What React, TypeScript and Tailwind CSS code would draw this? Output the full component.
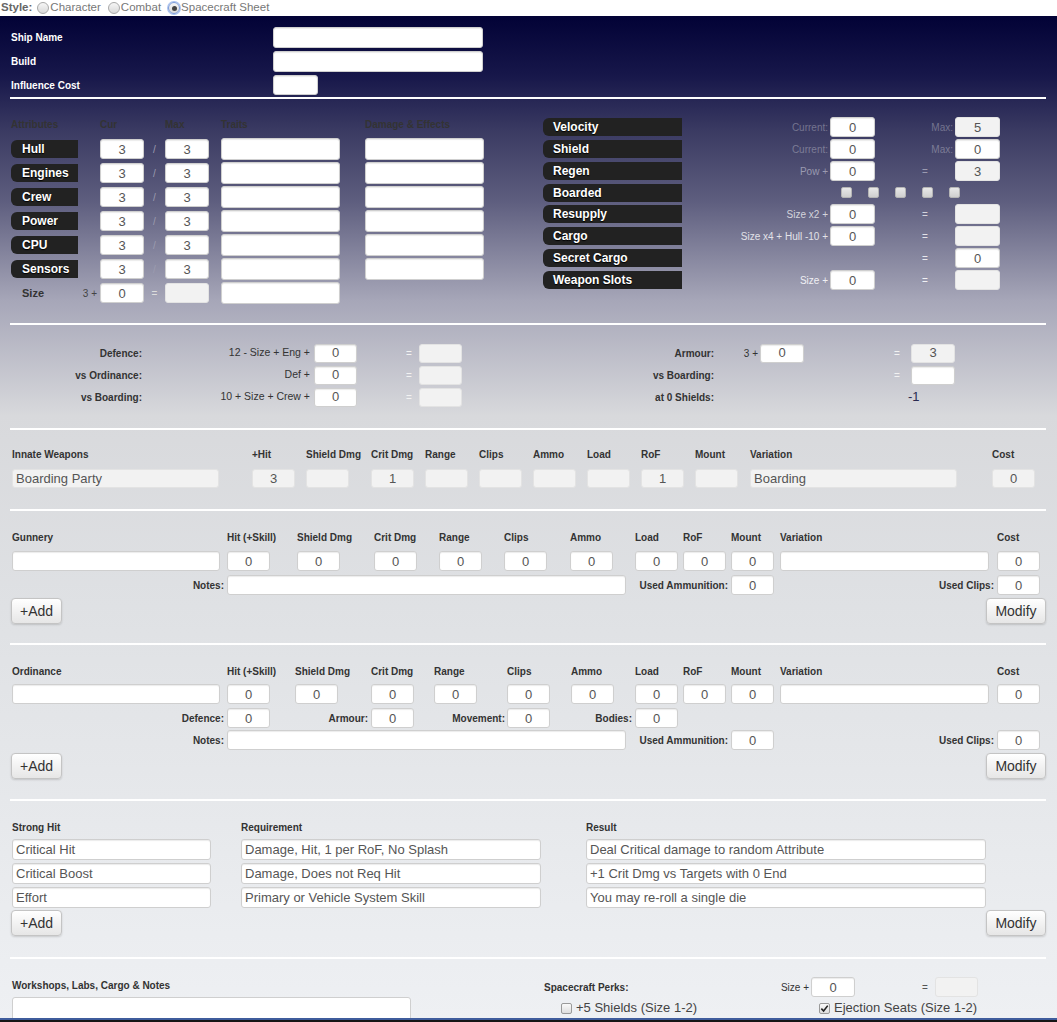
import React from "react";

type FieldProps = {
  className?: string;
  value?: string;
  ro?: boolean;
  left?: boolean;
};

const HEAD = "whitespace-nowrap text-[10px] font-bold leading-[12px] text-[#333]";
const LABEL = "whitespace-nowrap text-[10px] font-bold text-[#333]";

function Field({ className = "", value = "", ro = false, left = false }: FieldProps) {
  return (
    <input
      readOnly
      value={value}
      className={`${className} min-w-0 shrink-0 rounded-[3px] border px-[3px] text-[13px] text-[#555] outline-none ${
        left ? "text-left" : "text-center"
      } ${
        ro
          ? "border-[#e3e3e3] bg-[#f2f2f2]"
          : "border-[#cfcfcf] bg-white shadow-[inset_0_1px_1px_rgba(0,0,0,0.08)]"
      }`}
    />
  );
}

function Radio({ checked, className = "" }: { checked?: boolean; className?: string }) {
  return (
    <span
      className={`${className} grid h-[12px] w-[12px] place-items-center rounded-full border ${
        checked ? "border-[#7a9ad8] shadow-[0_0_0_1px_#a9c2f0]" : "border-[#a9a9a9]"
      } bg-[linear-gradient(#f6f6f6,#d9d9d9)]`}
    >
      {checked ? <span className="h-[5px] w-[5px] rounded-full bg-[#444]" /> : null}
    </span>
  );
}

function Tag({ children, className }: { children: React.ReactNode; className: string }) {
  return (
    <div
      className={`${className} flex h-[18px] shrink-0 items-center rounded-l-[6px] bg-[#222] text-[12px] font-bold text-white [text-shadow:0_1px_1px_#000]`}
    >
      {children}
    </div>
  );
}

function Button({ children, className = "" }: { children: React.ReactNode; className?: string }) {
  return (
    <button
      type="button"
      className={`${className} h-[26px] rounded-[4px] border border-[#c4c4c4] bg-[linear-gradient(#ffffff,#e6e6e6)] text-[14px] text-[#333] shadow-[0_1px_2px_rgba(0,0,0,0.15)]`}
    >
      {children}
    </button>
  );
}

function Check({ checked, className = "" }: { checked?: boolean; className?: string }) {
  return (
    <span
      className={`${className} grid h-[11px] w-[11px] shrink-0 place-items-center rounded-[2px] border border-[#9a9a9a] bg-[linear-gradient(#fafafa,#dedede)]`}
    >
      {checked ? (
        <svg viewBox="0 0 10 10" className="h-[9px] w-[9px]">
          <path d="M1.5 5.2 L4 7.8 L8.6 1.8" fill="none" stroke="#222" strokeWidth="1.8" />
        </svg>
      ) : null}
    </span>
  );
}

const ATTRS = ["Hull", "Engines", "Crew", "Power", "CPU", "Sensors"];

// label colours step lighter down the column, the way the faint text reads on the gradient
const SHIP = [
  { name: "Velocity", pre: "Current:", a: "0", mid: "Max:", b: "5", bro: true, tone: "text-[#74748f]" },
  { name: "Shield", pre: "Current:", a: "0", mid: "Max:", b: "0", bro: false, tone: "text-[#7c7c96]" },
  { name: "Regen", pre: "Pow +", a: "0", mid: "=", b: "3", bro: true, tone: "text-[#9a9ab0]" },
  { name: "Boarded", boxes: true, tone: "" },
  { name: "Resupply", pre: "Size x2 +", a: "0", mid: "=", b: "", bro: true, tone: "text-[#d4d4dc]" },
  { name: "Cargo", pre: "Size x4 + Hull -10 +", a: "0", mid: "=", b: "", bro: true, tone: "text-[#e2e2e8]" },
  { name: "Secret Cargo", mid: "=", b: "0", bro: false, tone: "text-[#e8e8ee]" },
  { name: "Weapon Slots", pre: "Size +", a: "0", mid: "=", b: "", bro: true, tone: "text-[#f0f0f4]" },
];

type Col = { label: string; cls: string; value?: string; left?: boolean };

const INNATE: Col[] = [
  { label: "Innate Weapons", cls: "w-[207px]", value: "Boarding Party", left: true },
  { label: "+Hit", cls: "ml-[33px] w-[43px]", value: "3" },
  { label: "Shield Dmg", cls: "ml-[11px] w-[43px]" },
  { label: "Crit Dmg", cls: "ml-[22px] w-[43px]", value: "1" },
  { label: "Range", cls: "ml-[11px] w-[43px]" },
  { label: "Clips", cls: "ml-[11px] w-[43px]" },
  { label: "Ammo", cls: "ml-[11px] w-[43px]" },
  { label: "Load", cls: "ml-[11px] w-[43px]" },
  { label: "RoF", cls: "ml-[11px] w-[43px]", value: "1" },
  { label: "Mount", cls: "ml-[11px] w-[43px]" },
  { label: "Variation", cls: "ml-[12px] w-[207px]", value: "Boarding", left: true },
  { label: "Cost", cls: "ml-[35px] w-[43px]", value: "0" },
];

const GUNNERY: Col[] = [
  { label: "Gunnery", cls: "w-[208px]", left: true },
  { label: "Hit (+Skill)", cls: "ml-[7px] w-[43px]", value: "0" },
  { label: "Shield Dmg", cls: "ml-[27px] w-[43px]", value: "0" },
  { label: "Crit Dmg", cls: "ml-[34px] w-[43px]", value: "0" },
  { label: "Range", cls: "ml-[22px] w-[43px]", value: "0" },
  { label: "Clips", cls: "ml-[22px] w-[43px]", value: "0" },
  { label: "Ammo", cls: "ml-[23px] w-[43px]", value: "0" },
  { label: "Load", cls: "ml-[22px] w-[43px]", value: "0" },
  { label: "RoF", cls: "ml-[5px] w-[43px]", value: "0" },
  { label: "Mount", cls: "ml-[5px] w-[43px]", value: "0" },
  { label: "Variation", cls: "ml-[6px] w-[209px]", left: true },
  { label: "Cost", cls: "ml-[8px] w-[43px]", value: "0" },
];

const ORDINANCE: Col[] = [
  { label: "Ordinance", cls: "w-[208px]", left: true },
  { label: "Hit (+Skill)", cls: "ml-[7px] w-[43px]", value: "0" },
  { label: "Shield Dmg", cls: "ml-[25px] w-[43px]", value: "0" },
  { label: "Crit Dmg", cls: "ml-[33px] w-[43px]", value: "0" },
  { label: "Range", cls: "ml-[20px] w-[43px]", value: "0" },
  { label: "Clips", cls: "ml-[30px] w-[43px]", value: "0" },
  { label: "Ammo", cls: "ml-[21px] w-[43px]", value: "0" },
  { label: "Load", cls: "ml-[21px] w-[43px]", value: "0" },
  { label: "RoF", cls: "ml-[5px] w-[43px]", value: "0" },
  { label: "Mount", cls: "ml-[5px] w-[43px]", value: "0" },
  { label: "Variation", cls: "ml-[6px] w-[209px]", left: true },
  { label: "Cost", cls: "ml-[8px] w-[43px]", value: "0" },
];

const STRONG = [
  ["Critical Hit", "Damage, Hit, 1 per RoF, No Splash", "Deal Critical damage to random Attribute"],
  ["Critical Boost", "Damage, Does not Req Hit", "+1 Crit Dmg vs Targets with 0 End"],
  ["Effort", "Primary or Vehicle System Skill", "You may re-roll a single die"],
];

function Divider() {
  return <div className="ml-[10px] mr-[11px] h-[2px] bg-white" />;
}

function WeaponHeader({ cols, gap }: { cols: Col[]; gap: string }) {
  return (
    <div className="flex pl-[12px]">
      {cols.map((c) => (
        <div key={c.label} className={`flex shrink-0 flex-col ${c.cls}`}>
          <span className={HEAD}>{c.label}</span>
          <Field className={`${gap} h-[20px] w-full`} value={c.value} left={c.left} />
        </div>
      ))}
    </div>
  );
}

function NotesRow({ className }: { className: string }) {
  return (
    <div className={`${className} flex h-[20px] items-center pl-[12px]`}>
      <span className={`${LABEL} w-[212px] text-right`}>Notes:</span>
      <Field className="ml-[3px] h-[20px] w-[399px]" left />
      <span className={`${LABEL} w-[102px] text-right`}>Used Ammunition:</span>
      <Field className="ml-[3px] h-[20px] w-[43px]" value="0" />
      <span className={`${LABEL} w-[220px] text-right`}>Used Clips:</span>
      <Field className="ml-[3px] h-[20px] w-[43px]" value="0" />
    </div>
  );
}

function ButtonRow({ className }: { className: string }) {
  return (
    <div className={`${className} flex pl-[11px] pr-[11px]`}>
      <Button className="w-[51px]">+Add</Button>
      <Button className="ml-auto w-[60px]">Modify</Button>
    </div>
  );
}

export default function App() {
  return (
    <div className="w-[1057px] overflow-hidden font-['Liberation_Sans',Arial,sans-serif]">
      <div className="flex h-[16px] items-center bg-white pl-[1px] text-[11.5px] text-[#777]">
        <span className="font-bold text-[#666]">Style:</span>
        <Radio className="ml-[5px]" />
        <span className="ml-[1px]">Character</span>
        <Radio className="ml-[7px]" />
        <span className="ml-[1px]">Combat</span>
        <Radio checked className="ml-[7px]" />
        <span className="ml-[1px]">Spacecraft Sheet</span>
      </div>

      <div className="h-[1002px] overflow-hidden bg-[linear-gradient(to_bottom,#020236_0px,#17174a_60px,#3a3a62_114px,#5d5d7e_184px,#a6a6b8_284px,#d8d9dc_400px,#dfe1e4_590px,#eef0f3_1000px)]">
        {/* ship identity */}
        <div className="pl-[11px] pt-[11px]">
          {[
            ["Ship Name", "w-[210px] h-[21px]"],
            ["Build", "w-[210px] h-[21px]"],
            ["Influence Cost", "w-[45px] h-[20px]"],
          ].map(([label, cls], i) => (
            <div key={label} className={`flex ${i < 2 ? "h-[24px]" : "h-[20px]"}`}>
              <div className="flex h-[21px] w-[262px] items-center text-[10px] font-bold text-white">
                {label}
              </div>
              <Field className={cls} left />
            </div>
          ))}
        </div>
        <div className="mt-[2px]">
          <Divider />
        </div>

        {/* attributes */}
        <div className="flex">
          <div className="w-[532px] shrink-0 pl-[11px] pt-[20px]">
            <div className={`flex ${HEAD}`}>
              <span className="w-[89px]">Attributes</span>
              <span className="w-[65px]">Cur</span>
              <span className="w-[56px]">Max</span>
              <span className="w-[144px]">Traits</span>
              <span>Damage &amp; Effects</span>
            </div>
            <div className="mt-[6px]">
              {ATTRS.map((a) => (
                <div key={a} className="flex h-[24px] items-center">
                  <div className="w-[89px] shrink-0">
                    <Tag className="w-[67px] pl-[11px]">{a}</Tag>
                  </div>
                  <Field className="h-[20px] w-[44px]" value="3" />
                  <span className="w-[21px] text-center text-[10px] text-[#9c9cb0]">/</span>
                  <Field className="h-[20px] w-[44px]" value="3" />
                  <Field className="ml-[12px] h-[22px] w-[119px]" left />
                  <Field className="ml-[25px] h-[22px] w-[119px]" left />
                </div>
              ))}
              <div className="flex h-[24px] items-center">
                <div className="flex w-[89px] shrink-0 items-center justify-between">
                  <span className="pl-[11px] text-[11px] font-bold text-[#333]">Size</span>
                  <span className="pr-[3px] text-[10px] text-[#444]">3 +</span>
                </div>
                <Field className="h-[20px] w-[44px]" value="0" />
                <span className="w-[21px] text-center text-[10px] text-[#ddd]">=</span>
                <Field className="h-[20px] w-[44px]" ro />
                <Field className="ml-[12px] h-[22px] w-[119px]" left />
              </div>
            </div>
          </div>

          <div className="pl-[11px] pt-[17px]">
            {SHIP.map((s) => (
              <div key={s.name} className={`flex items-center ${s.boxes ? "h-[21px]" : "h-[22px]"}`}>
                <Tag className="w-[139px] pl-[10px]">{s.name}</Tag>
                {s.boxes ? (
                  <div className="ml-[159px] flex gap-[16px]">
                    {[0, 1, 2, 3, 4].map((n) => (
                      <span
                        key={n}
                        className="h-[11px] w-[11px] rounded-[2px] border border-[#b5b5b5] bg-[linear-gradient(#e8e8e8,#cfcfcf)]"
                      />
                    ))}
                  </div>
                ) : (
                  <>
                    <span className={`w-[148px] pr-[2px] text-right text-[10px] ${s.tone}`}>
                      {s.pre ?? ""}
                    </span>
                    {s.pre ? (
                      <Field className="h-[20px] w-[45px]" value={s.a} />
                    ) : (
                      <span className="w-[45px]" />
                    )}
                    <span
                      className={`flex w-[80px] text-[10px] ${s.tone} ${
                        s.mid === "=" ? "pl-[47px]" : "justify-end pr-[2px]"
                      }`}
                    >
                      {s.mid}
                    </span>
                    <Field className="h-[20px] w-[45px]" value={s.b} ro={s.bro} />
                  </>
                )}
              </div>
            ))}
          </div>
        </div>

        <div className="mt-[18px]">
          <Divider />
        </div>

        {/* defence */}
        <div className="pt-[17px]">
          {[
            { l: "Defence:", f: "12 - Size + Eng +", r: "Armour:", rf: "3 +", kind: "armour" },
            { l: "vs Ordinance:", f: "Def +", r: "vs Boarding:", rf: "", kind: "board" },
            { l: "vs Boarding:", f: "10 + Size + Crew +", r: "at 0 Shields:", rf: "", kind: "shield" },
          ].map((row) => (
            <div key={row.l} className="flex h-[22px] items-center pl-[11px]">
              <span className={`${LABEL} w-[131px] text-right`}>{row.l}</span>
              <span className="w-[168px] text-right text-[10.5px] text-[#333]">{row.f}</span>
              <Field className="ml-[4px] h-[19px] w-[43px]" value="0" />
              <span className="w-[62px] pl-[49px] text-[10px] text-[#f2f2f2]">=</span>
              <Field className="h-[19px] w-[43px]" ro />
              <span className={`${LABEL} w-[252px] text-right`}>{row.r}</span>
              <span className="w-[46px] pr-[2px] text-right text-[10px] text-[#333]">{row.rf}</span>
              {row.kind === "armour" ? (
                <Field className="h-[19px] w-[44px]" value="0" />
              ) : (
                <span className="w-[44px]" />
              )}
              {row.kind === "shield" ? (
                <span className="pl-[104px] text-[13px] text-[#2a2a50]">-1</span>
              ) : (
                <>
                  <span className="w-[107px] pl-[90px] text-[10px] text-[#f2f2f2]">=</span>
                  <Field
                    className="h-[19px] w-[44px]"
                    value={row.kind === "armour" ? "3" : ""}
                    ro={row.kind === "armour"}
                  />
                </>
              )}
            </div>
          ))}
        </div>

        <div className="mt-[20px]">
          <Divider />
        </div>

        {/* innate weapons */}
        <div className="pt-[19px]">
          <div className="flex pl-[12px]">
            {INNATE.map((c) => (
              <div key={c.label} className={`flex shrink-0 flex-col ${c.cls}`}>
                <span className={HEAD}>{c.label}</span>
                <Field className="mt-[8px] h-[19px] w-full" value={c.value} left={c.left} ro />
              </div>
            ))}
          </div>
        </div>

        <div className="mt-[21px]">
          <Divider />
        </div>

        {/* gunnery */}
        <div className="pt-[21px]">
          <WeaponHeader cols={GUNNERY} gap="mt-[7px]" />
          <NotesRow className="mt-[4px]" />
          <ButtonRow className="mt-[3px]" />
        </div>

        <div className="mt-[19px]">
          <Divider />
        </div>

        {/* ordinance */}
        <div className="pt-[21px]">
          <WeaponHeader cols={ORDINANCE} gap="mt-[6px]" />
          <div className="mt-[4px] flex h-[20px] items-center pl-[12px]">
            <span className={`${LABEL} w-[212px] text-right`}>Defence:</span>
            <Field className="ml-[3px] h-[20px] w-[43px]" value="0" />
            <span className={`${LABEL} w-[98px] text-right`}>Armour:</span>
            <Field className="ml-[3px] h-[20px] w-[43px]" value="0" />
            <span className={`${LABEL} w-[91px] text-right`}>Movement:</span>
            <Field className="ml-[2px] h-[20px] w-[43px]" value="0" />
            <span className={`${LABEL} w-[82px] text-right`}>Bodies:</span>
            <Field className="ml-[3px] h-[20px] w-[43px]" value="0" />
          </div>
          <NotesRow className="mt-[2px]" />
          <ButtonRow className="mt-[3px]" />
        </div>

        <div className="mt-[20px]">
          <Divider />
        </div>

        {/* strong hit */}
        <div className="pt-[21px]">
          <div className={`flex pl-[12px] ${HEAD}`}>
            <span className="w-[229px]">Strong Hit</span>
            <span className="w-[345px]">Requirement</span>
            <span>Result</span>
          </div>
          <div className="mt-[5px] flex flex-col gap-[3px] pl-[12px]">
            {STRONG.map(([a, b, c]) => (
              <div key={a} className="flex">
                <Field className="h-[21px] w-[199px]" value={a} left />
                <Field className="ml-[30px] h-[21px] w-[300px]" value={b} left />
                <Field className="ml-[45px] h-[21px] w-[400px]" value={c} left />
              </div>
            ))}
          </div>
          <ButtonRow className="mt-[2px]" />
        </div>

        <div className="mt-[21px]">
          <Divider />
        </div>

        {/* workshops & perks */}
        <div className="flex pt-[18px]">
          <div className="w-[532px] shrink-0 pl-[12px] pt-[3px]">
            <div className={HEAD}>Workshops, Labs, Cargo &amp; Notes</div>
            <textarea
              readOnly
              value=""
              className="mt-[5px] block h-[40px] w-[399px] resize-none rounded-[3px] border border-[#cfcfcf] bg-white outline-none"
            />
          </div>
          <div className="pl-[12px]">
            <div className="flex h-[20px] items-center">
              <div className="flex w-[265px] items-center justify-between">
                <span className={LABEL}>Spacecraft Perks:</span>
                <span className="text-[10px] text-[#333]">Size +</span>
              </div>
              <Field className="ml-[2px] h-[20px] w-[44px]" value="0" />
              <span className="w-[80px] pl-[67px] text-[10px] text-[#555]">=</span>
              <Field className="h-[20px] w-[43px]" ro />
            </div>
            <div className="mt-[4px] flex h-[14px] items-center text-[13px] text-[#444]">
              <Check className="ml-[17px]" />
              <span className="ml-[4px] w-[243px]">+5 Shields (Size 1-2)</span>
              <Check checked />
              <span className="ml-[4px]">Ejection Seats (Size 1-2)</span>
            </div>
          </div>
        </div>
      </div>
      <div className="h-[20px] border-t-[2px] border-[#3f5c9c] bg-[#151515]" />
    </div>
  );
}
